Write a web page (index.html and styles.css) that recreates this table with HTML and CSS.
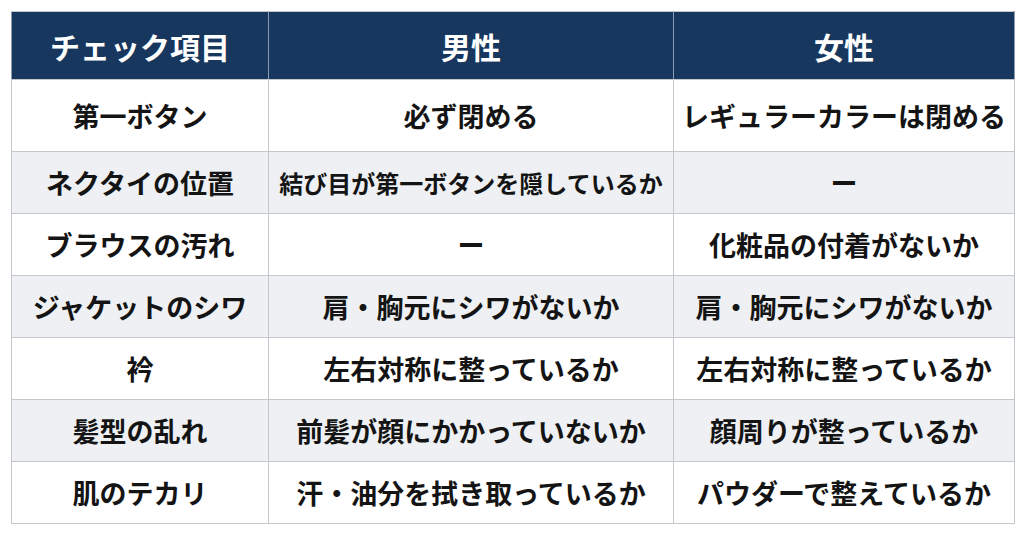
FILE: index.html
```html
<!DOCTYPE html>
<html lang="ja">
<head>
<meta charset="utf-8">
<link rel="stylesheet" href="styles.css">
</head>
<body>
<table class="check">
  <colgroup>
    <col class="c1"><col class="c2"><col class="c3">
  </colgroup>
  <thead>
    <tr class="head"><th>チェック項目</th><th>男性</th><th>女性</th></tr>
  </thead>
  <tbody>
    <tr class="first"><td>第一ボタン</td><td>必ず閉める</td><td>レギュラーカラーは閉める</td></tr>
    <tr class="alt"><td>ネクタイの位置</td><td class="small">結び目が第一ボタンを隠しているか</td><td>ー</td></tr>
    <tr><td>ブラウスの汚れ</td><td>ー</td><td>化粧品の付着がないか</td></tr>
    <tr class="alt"><td>ジャケットのシワ</td><td>肩・胸元にシワがないか</td><td>肩・胸元にシワがないか</td></tr>
    <tr><td>衿</td><td>左右対称に整っているか</td><td>左右対称に整っているか</td></tr>
    <tr class="alt"><td>髪型の乱れ</td><td>前髪が顔にかかっていないか</td><td>顔周りが整っているか</td></tr>
    <tr><td>肌のテカリ</td><td>汗・油分を拭き取っているか</td><td>パウダーで整えているか</td></tr>
  </tbody>
</table>
</body>
</html>
```

FILE: styles.css
```css
html, body {
  margin: 0;
  padding: 0;
  background: #ffffff;
}
body {
  padding: 11px 0 0 11px;
  font-family: "Noto Sans CJK JP", "Noto Sans", sans-serif;
  font-weight: 700;
  color: #141414;
}
.check {
  border-collapse: collapse;
  table-layout: fixed;
  width: 1003px;
}
.c1 { width: 257px; }
.c2 { width: 405px; }
.c3 { width: 341px; }
.check th, .check td {
  border: 1px solid #c4c7cb;
  text-align: center;
  vertical-align: middle;
  padding: 0;
  white-space: nowrap;
  line-height: 1;
}
.check th {
  background: #18375f;
  color: #ffffff;
  font-size: 30px;
  height: 67px;
  border-color: #c4c7cb #8d9bb0;
}
.check td {
  font-size: 27px;
  height: 61px;
  background: #ffffff;
}
.check tr.first td {
  height: 71px;
}
.check tr.alt td {
  background: #eef0f3;
}
.check td.small {
  font-size: 24px;
}
```
